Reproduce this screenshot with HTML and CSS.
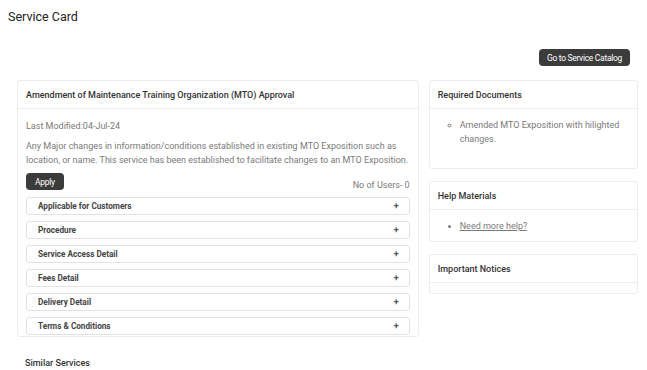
FILE: index.html
```html
<!DOCTYPE html>
<html lang="en">
<head>
    <meta charset="UTF-8">
    <title>Service Card</title>
    <link rel="stylesheet" href="styles.css">
</head>
<body>
    <div class="page">
        <h1>Service Card</h1>

        <div class="toolbar">
            <button class="btn">Go to Service Catalog</button>
        </div>

        <div class="layout">
            <div class="card main-card">
                <div class="card-header">Amendment of Maintenance Training Organization (MTO) Approval</div>
                <div class="card-body">
                    <p class="modified">Last Modified:04-Jul-24</p>
                    <p class="desc">Any Major changes in information/conditions established in existing MTO Exposition such as location, or name. This service has been established to facilitate changes to an MTO Exposition.</p>
                    <div class="apply-row">
                        <button class="btn btn-small">Apply</button>
                        <span class="users">No of Users- 0</span>
                    </div>
                    <div class="accordion">
                        <div class="acc-item"><span>Applicable for Customers</span><span class="plus">+</span></div>
                        <div class="acc-item"><span>Procedure</span><span class="plus">+</span></div>
                        <div class="acc-item"><span>Service Access Detail</span><span class="plus">+</span></div>
                        <div class="acc-item"><span>Fees Detail</span><span class="plus">+</span></div>
                        <div class="acc-item"><span>Delivery Detail</span><span class="plus">+</span></div>
                        <div class="acc-item"><span>Terms &amp; Conditions</span><span class="plus">+</span></div>
                    </div>
                </div>
            </div>

            <div class="side">
                <div class="card">
                    <div class="card-header">Required Documents</div>
                    <div class="card-body side-body">
                        <ul class="circle-list">
                            <li>Amended MTO Exposition with hilighted changes.</li>
                        </ul>
                    </div>
                </div>
                <div class="card">
                    <div class="card-header">Help Materials</div>
                    <div class="card-body help-body">
                        <ul class="disc-list">
                            <li><a href="#">Need more help?</a></li>
                        </ul>
                    </div>
                </div>
                <div class="card">
                    <div class="card-header">Important Notices</div>
                    <div class="card-body empty-body"></div>
                </div>
            </div>
        </div>

        <h2>Similar Services</h2>
    </div>
</body>
</html>
```

FILE: styles.css
```css
* {
    margin: 0;
    padding: 0;
    box-sizing: border-box;
}
body {
    font-family: Roboto, "Liberation Sans", sans-serif;
    background-color: #fff;
    color: #333;
}
.page {
    padding: 9px 9px 0 8px;
}
h1 {
    font-size: 12.5px;
    font-weight: 400;
    color: #222;
    line-height: 16px;
}
.toolbar {
    display: flex;
    justify-content: flex-end;
    padding: 24px 8px 14px 0;
}
.btn {
    background-color: #3b3b3b;
    color: #fff;
    border: none;
    border-radius: 4px;
    font-family: Roboto, "Liberation Sans", sans-serif;
    font-size: 8.5px;
    letter-spacing: -0.3px;
    height: 17px;
    padding: 0 8px;
    cursor: pointer;
}
.layout {
    display: flex;
    gap: 10px;
    padding-left: 9px;
    align-items: flex-start;
}
.card {
    background-color: #fff;
    border: 1px solid #ececec;
    border-radius: 3px;
}
.main-card {
    width: 403px;
}
.card-header {
    font-size: 9px;
    font-weight: 500;
    color: #333;
    padding: 7px 8px 6px;
    line-height: 14px;
    border-bottom: 1px solid #ececec;
}
.card-body {
    padding: 10px 8px 0;
    font-size: 9px;
    color: #7a7a7a;
}
.modified {
    line-height: 14px;
    margin-bottom: 6px;
}
.desc {
    line-height: 14px;
}
.apply-row {
    display: flex;
    justify-content: space-between;
    align-items: flex-end;
    margin-top: 6px;
}
.btn-small {
    padding: 0 9px;
    font-size: 8.5px;
}
.users {
    font-size: 9px;
    color: #7a7a7a;
}
.accordion {
    display: flex;
    flex-direction: column;
    gap: 6px;
    margin-top: 7px;
    padding-bottom: 1px;
}
.acc-item {
    display: flex;
    justify-content: space-between;
    align-items: center;
    height: 18px;
    border: 1px solid #e2e2e2;
    border-radius: 3px;
    padding: 0 10px 0 11px;
    font-size: 8.2px;
    font-weight: 700;
    color: #444;
}
.plus {
    color: #555;
    font-size: 9px;
}
.side {
    width: 210px;
    display: flex;
    flex-direction: column;
    gap: 12px;
}
.side-body {
    height: 59px;
    padding-top: 9px;
}
.circle-list {
    list-style: circle;
    padding-left: 22px;
    line-height: 14px;
}
.help-body {
    height: 31px;
    padding-top: 9px;
}
.disc-list {
    list-style: disc;
    padding-left: 22px;
    line-height: 14px;
}
.disc-list a {
    color: #7a7a7a;
}
.empty-body {
    height: 10px;
    padding: 0;
}
h2 {
    font-size: 9px;
    font-weight: 500;
    color: #333;
    padding: 21px 0 0 17px;
}
```
